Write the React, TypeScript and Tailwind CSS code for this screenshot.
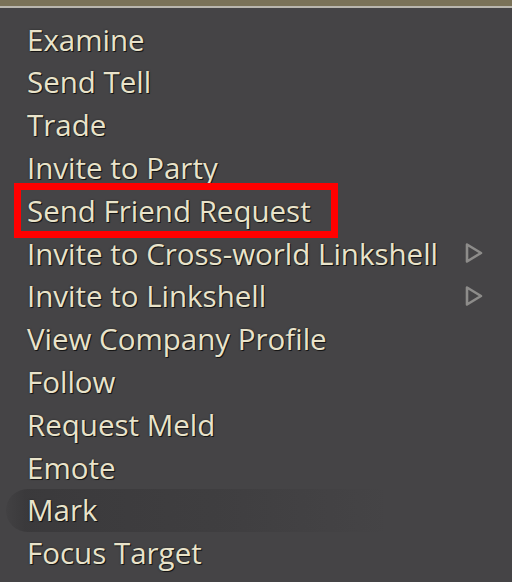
import React from "react";

const items: { label: string; sub?: boolean; boxed?: boolean; hl?: boolean }[] = [
  { label: "Examine" },
  { label: "Send Tell" },
  { label: "Trade" },
  { label: "Invite to Party" },
  { label: "Send Friend Request", boxed: true },
  { label: "Invite to Cross-world Linkshell", sub: true },
  { label: "Invite to Linkshell", sub: true },
  { label: "View Company Profile" },
  { label: "Follow" },
  { label: "Request Meld" },
  { label: "Emote" },
  { label: "Mark", hl: true },
  { label: "Focus Target" },
];

function Arrow() {
  return (
    <svg width="20" height="22" viewBox="0 0 20 22" className="block">
      <path d="M3 2.5 L17 11 L3 19.5 Z" fill="none" stroke="#8d8c8a" strokeWidth="2.6" strokeLinejoin="round" />
    </svg>
  );
}

export default function App() {
  return (
    <div className="w-[512px] h-[582px] overflow-hidden flex flex-col bg-[#454446]">
      <div className="h-[6px] bg-[#7a7258] shrink-0" />
      <div className="h-[2px] bg-[#b9b6ae] shrink-0" />
      <div
        className="flex-1 flex flex-col pt-[10px] pr-[28px] bg-[#454446]"
        style={{ fontFamily: '"Open Sans", "Noto Sans", sans-serif' }}
      >
        {items.map((it) => (
          <div
            key={it.label}
            className={
              "relative h-[42.8px] shrink-0 flex items-center justify-between " +
              (it.hl
                ? "ml-[6px] pl-[21px] rounded-l-full bg-[linear-gradient(90deg,rgba(48,47,49,0.15)_0%,rgba(48,47,49,0.5)_4%,rgba(50,49,51,0.3)_45%,rgba(50,49,51,0)_80%)]"
                : "pl-[27px]")
            }
          >
            <span className="text-[29.5px] leading-none text-[#e9e3ca] [text-shadow:1px_1px_0_#151515,0_0_2px_#222]">
              {it.label}
            </span>
            {it.sub && <Arrow />}
            {it.boxed && (
              <div className="absolute left-[14px] top-[-6px] w-[324px] h-[55px] border-[7px] border-[#ff0000]" />
            )}
          </div>
        ))}
      </div>
    </div>
  );
}
